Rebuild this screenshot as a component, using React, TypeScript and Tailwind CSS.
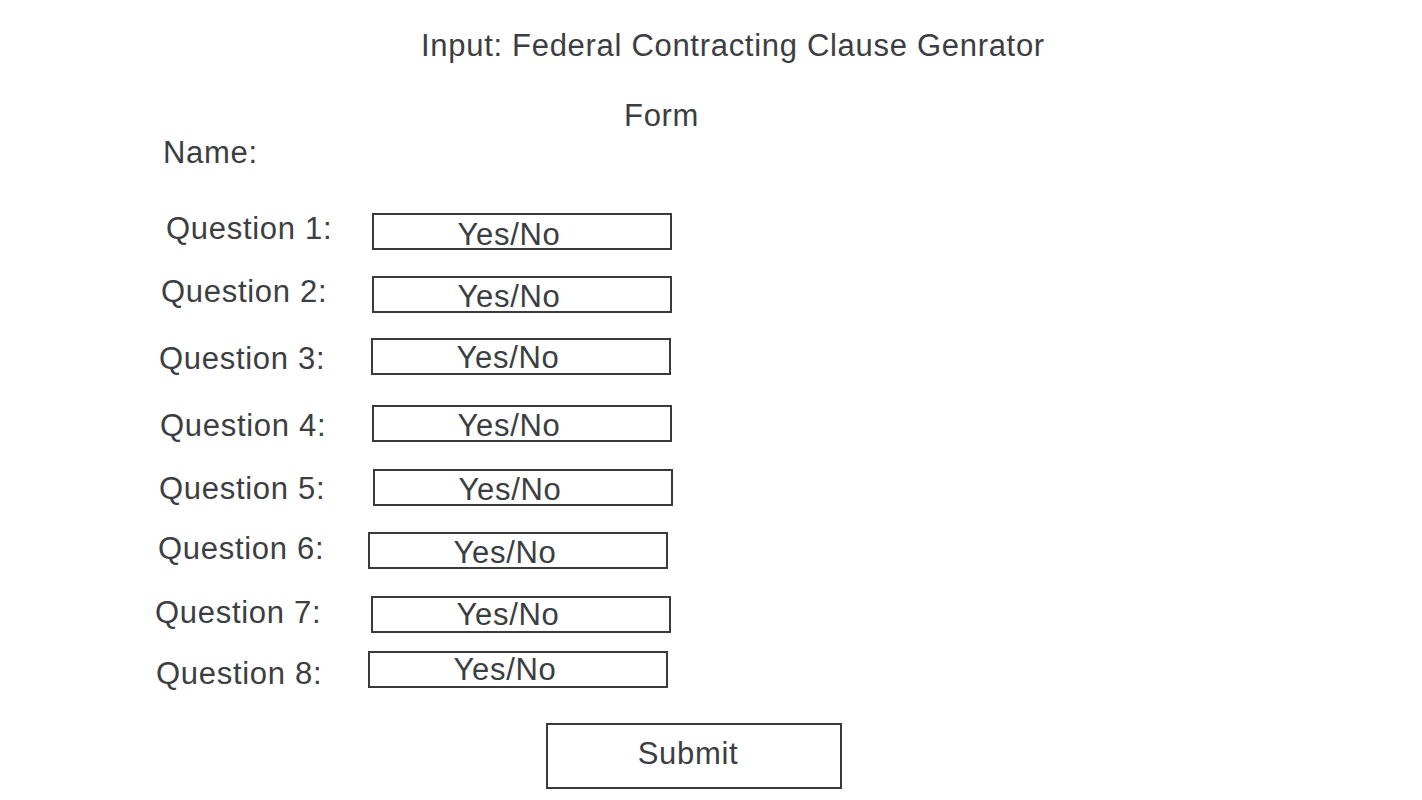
import React from 'react';

// wireframe rows: each one was placed by hand, so offsets differ a little
const rows = [
  { label: 'Question 1:', row: 'mt-[42px] pl-[166px]', lab: 'w-[206px] mt-0', txt: 'mt-[4px]' },
  { label: 'Question 2:', row: 'mt-[26px] pl-[161px]', lab: 'w-[211px] mt-0', txt: 'mt-[3px]' },
  { label: 'Question 3:', row: 'mt-[25px] pl-[159px]', lab: 'w-[212px] mt-[5px]', txt: 'mt-[2px]' },
  { label: 'Question 4:', row: 'mt-[30px] pl-[160px]', lab: 'w-[212px] mt-[5px]', txt: 'mt-[3px]' },
  { label: 'Question 5:', row: 'mt-[27px] pl-[159px]', lab: 'w-[214px] mt-[4px]', txt: 'mt-[3px]' },
  { label: 'Question 6:', row: 'mt-[26px] pl-[158px]', lab: 'w-[210px] mt-[1px]', txt: 'mt-[3px]' },
  { label: 'Question 7:', row: 'mt-[27px] pl-[155px]', lab: 'w-[216px] mt-[1px]', txt: 'mt-[1px]' },
  { label: 'Question 8:', row: 'mt-[18px] pl-[156px]', lab: 'w-[212px] mt-[7px]', txt: 'mt-[1px]' },
];

export default function App() {
  return (
    <div className="min-h-screen bg-white text-[#3b3e42] font-['Liberation_Sans',Arial,sans-serif] text-[31px] tracking-[0.7px]">
      {/* Header */}
      <div className="pt-[28px] pl-[421px] leading-[36px]">Input: Federal Contracting Clause Genrator</div>
      <div className="mt-[34px] pl-[624px] leading-[36px]">Form</div>
      <div className="mt-[1px] pl-[163px] leading-[36px]">Name:</div>

      {/* Questions */}
      {rows.map((r) => (
        <div key={r.label} className={`flex items-start ${r.row}`}>
          <div className={`leading-none shrink-0 ${r.lab}`}>{r.label}</div>
          <div className="w-[300px] h-[37px] border-2 border-[#3a3a3a] flex justify-center pr-[26px]">
            <span className={`leading-none ${r.txt}`}>Yes/No</span>
          </div>
        </div>
      ))}

      {/* Submit */}
      <div className="mt-[34px] pl-[546px]">
        <button className="w-[296px] h-[66px] border-2 border-[#3a3a3a] flex items-start justify-center pr-[12px] pt-[13px] leading-none">
          Submit
        </button>
      </div>
    </div>
  );
}
